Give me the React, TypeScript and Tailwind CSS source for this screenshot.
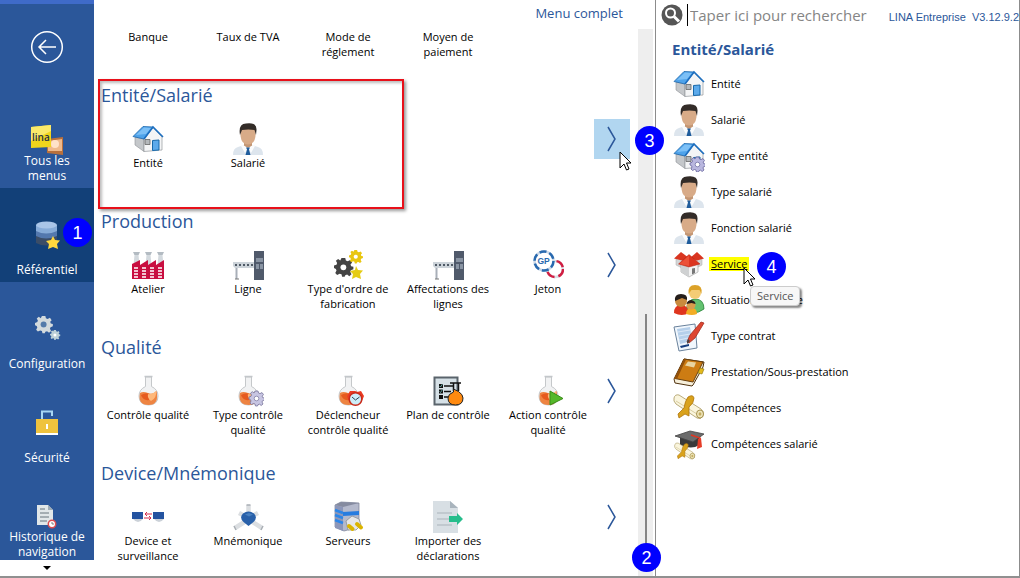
import React from 'react'

type Item = {
    label: string
    icon?: React.ReactNode
}

const Person = () => (
    <svg viewBox="0 0 32 32" className="h-8 w-8">
        <path d="M1 32q0-7 5-8l6-2h8l6 2q5 1 5 8z" fill="#dde5ed" />
        <path d="M12 18h8v5l-4 4-4-4z" fill="#c39674" />
        <path d="M11 22l5 3-3 5-4-7zM21 22l-5 3 3 5 4-7z" fill="#fbfcfd" />
        <path d="M14 24.500h4l-1 2 1.500 5.500h-5L15 26.500z" fill="#1f5c9c" />
        <path d="M8.500 8q0-5 7.500-5t7.500 5v5q-1 8.500-7.500 8.500T8.500 13z" fill="#d8ab88" />
        <path d="M8 12Q6 1 14 .500 25-1 24.500 7L24 12l-1.500-5q-6-1-12.500 0z" fill="#332c28" />
    </svg>
)

const House = ({ gear = false }: { gear?: boolean }) => (
    <svg viewBox="0 0 32 32" className="h-8 w-8">
        <path d="M3 14l9 2v12.500L3 22z" fill="#c4c7ca" stroke="#8d9195" strokeWidth=".6" />
        <path d="M12 15l9-10.500 9 9.500v13l-18 1.500z" fill="#f4f5f6" stroke="#94989c" strokeWidth=".7" />
        <path d="M1 13.500L11 3.500l10 .5-9 12z" fill="#4fa3ea" stroke="#1c66ab" strokeWidth=".8" />
        <path d="M4 12l8-7.500 7 .500-5 6z" fill="#7dc0f6" />
        <path d="M12 16l9-12 10 10" fill="none" stroke="#1d6fc0" strokeWidth="1.600" />
        <path d="M13 16.500h5v5h-5z" fill="#b4b8bb" stroke="#666" strokeWidth=".8" />
        <path d="M20.500 17.500l6.500-.5v10l-6.500.5z" fill="#5caaeb" stroke="#1769aa" />
        {gear && <g transform="translate(17 17)"><Gear fill="#b9b7df" stroke="#67659c" /></g>}
    </svg>
)

// drawn in a 15x15 box
const Gear = ({ fill, stroke = 'none' }: { fill: string; stroke?: string }) => (
    <g>
        <path d="M6 0h3l.5 2 1.500.6 2-1 1.500 2-1.300 1.500.5 1.500 1.800.4v2l-2 .8-.5 1.200 1 2-1.800 1.500-1.700-1.300-1.500.5L8.500 15h-2L6 13l-1.500-.5-2 1L1 12l1-2-.5-1.300L0 8V6l2-.7.5-1.300-1-1.800L3.300.7 5 2z" fill={fill} stroke={stroke} strokeWidth=".8" />
        <circle cx="7.500" cy="7.500" r="2.300" fill="#fff" stroke={stroke} strokeWidth=".7" />
    </g>
)

const Factory = () => (
    <svg viewBox="0 0 32 32" className="h-8 w-8">
        {[0, 1, 2].map((n) => (
            <g key={n} transform={`translate(${n * 12})`}>
                <path d="M2 3h5l-.500 3 1 10H1.500l1-10z" fill="#d3d9de" />
                <path d="M1 3h7L6.500 6H2.500z" fill="#b3bbc2" />
            </g>
        ))}
        <path d="M0 15l8-4v5l8-5v5l8-5v5l8-5v19H0z" fill="#c80e40" />
        {[2, 10, 18, 26].map((x) => (
            <path key={x} d={`M${x} 19h4m-4 3h4m-4 3h4m-4 3h4`} stroke="#fff" strokeWidth="1.500" />
        ))}
    </svg>
)

const Line = () => (
    <svg viewBox="0 0 32 32" className="h-8 w-8">
        <path d="M22 2h10v29H22z" fill="#505a6b" />
        <path d="M24 9h7v4h-7zM24 15h3v5h-3zM28 15h3v5h-3z" fill="#8994a3" />
        <path d="M1 13h21v6H3l-2-2z" fill="#ccd3d9" />
        <path d="M3 16h19" stroke="#505a66" strokeWidth="2" strokeDasharray="2 2" />
        <path d="M4.500 19v11" stroke="#a8afb8" strokeWidth="2" />
        <path d="M3 30h4" stroke="#777" />
    </svg>
)

const Order = () => (
    <svg viewBox="0 0 32 32" className="h-8 w-8">
        <g transform="translate(2 9) scale(1.250)"><Gear fill="#444" /></g>
        <g transform="translate(17 1) scale(.9)"><Gear fill="#e9c60f" /></g>
        <path d="M24 17l2 4 5 .5-3 3.500 1 5-5-2-4 2 1-5-3-3 5-1z" fill="#e5cc13" />
    </svg>
)

const Token = () => (
    <svg viewBox="0 0 32 32" className="h-8 w-8">
        <circle cx="23" cy="20" r="8" fill="#fff" stroke="#d9dfe6" strokeWidth="2.500" />
        <circle cx="23" cy="20" r="8" fill="none" stroke="#d01e42" strokeWidth="2.500" strokeDasharray="9 4" />
        <circle cx="12" cy="12" r="9.500" fill="#fff" stroke="#ccd9e8" strokeWidth="2.500" />
        <circle cx="12" cy="12" r="9.500" fill="none" stroke="#2869af" strokeWidth="2.500" strokeDasharray="7 3" />
        <text x="5.500" y="15" fontSize="8.500" fontWeight="bold" fontFamily="Liberation Sans, sans-serif" fill="#2869af">GP</text>
    </svg>
)

const Flask = ({ extra }: { extra?: 'gear' | 'clock' | 'play' }) => (
    <svg viewBox="0 0 32 32" className="h-8 w-8">
        <path d="M13.500 2h6v9.500q6.500 3 6.500 9.500 0 9-9.500 9T7 21q0-6.500 6.500-9.500z" fill="#f1f2f3" stroke="#c5c8ca" />
        <path d="M12.500 1.500h8" stroke="#c3c7ca" strokeWidth="1.500" />
        <path d="M8 18q3-2 8 0t8.500-2q3 14-8 14T8 18z" fill="#ee8442" />
        <path d="M9 20q5-3 8-1v6q-6 1-8-5z" fill="#e65a1e" />
        <path d="M16 19q4 1 8-3 1 7-5 10-4-3-3-7z" fill="#ffb87a" />
        {extra === 'gear' && <g transform="translate(17 16)"><Gear fill="#c7c5e2" stroke="#77749b" /></g>}
        {extra === 'clock' && (
            <g>
                <path d="M15 21l3-5h5l2 1 4-1 3 5-2 5H17z" fill="#eb3b22" />
                <circle cx="23.500" cy="24" r="6.300" fill="#cdeef8" stroke="#c92b1b" strokeWidth="1.500" />
                <path d="M20 22l3.500 3 4-3" fill="none" stroke="#345" />
            </g>
        )}
        {extra === 'play' && <path d="M18 16l13 7.500-13 6.500z" fill="#55b82a" stroke="#398c19" />}
    </svg>
)

const Plan = () => (
    <svg viewBox="0 0 32 32" className="h-8 w-8">
        <path d="M2.500 2.500h23v27h-23z" fill="#d6e1e7" stroke="#5a646c" strokeWidth="2" />
        <path d="M7 9h4v4H7zM7 14.500h4v4H7zM7 20h4v4H7z" fill="#111" />
        <path d="M7.500 11l1 1 2-3M7.500 16.500l1 1 2-3" fill="none" stroke="#7bd6d3" strokeWidth=".7" />
        <path d="M12 11h9M12 16.500h7M12 22h6" stroke="#111" strokeWidth="1.500" />
        <path d="M18 8h11M21.500 8v8M26.500 8v8" stroke="#111" strokeWidth="1.500" />
        <path d="M21.500 14l5 2.500q4.500 3 4.500 6.500 0 7-7.500 7T16 23q0-4 5.500-6z" fill="#ff8a10" stroke="#222" />
    </svg>
)

const Device = () => (
    <svg viewBox="0 0 32 32" className="h-8 w-8">
        <path d="M1 18q5 6 10 0zM22 18q5 6 10 0z" fill="#cbd1d8" />
        <path d="M0 11h11v7H0zM21 11h11v7H21z" fill="#2453a0" />
        <path d="M20 13h-7m2-2l-2 2 2 2M12 17h7m-2-2l2 2-2 2" fill="none" stroke="#d52c4b" />
    </svg>
)

const Molecule = () => (
    <svg viewBox="0 0 32 32" className="h-8 w-8">
        <path d="M16.500 15V4M14 20L3 27M19 20l11 7M13 15l-6-3M20 15l6-3" stroke="#dbdee1" strokeWidth="4.500" />
        <path d="M14.500 4h4M2 25l2 4M31 25l-2 4" stroke="#a9afb5" strokeWidth="1.500" />
        <path d="M11 12.500q5.500-4 11 0 4 4-.500 8.500l-5 4-5-4q-4.500-4.500-.500-8.500z" fill="#2860a9" />
        <path d="M13 13.500l4-1.500 4 1.500-4 2z" fill="#4980c0" />
    </svg>
)

const Servers = () => (
    <svg viewBox="0 0 32 32" className="h-8 w-8">
        <path d="M3 4l6-3 18 1v24l-15 4-9-4z" fill="#b4b9cc" stroke="#757c92" strokeWidth=".7" />
        <path d="M3 4l8 2v24l-8-3z" fill="#8c96b8" />
        <path d="M3 4l6-3 18 1-16 4z" fill="#858ba0" />
        <path d="M3 9l8 3M3 14l8 3M3 19l8 3" stroke="#2b86e9" strokeWidth="2.500" />
        <path d="M11 11l16-1v4l-16 1z" fill="#277cdf" />
        <path d="M14 20l6-5 7 3 2 6-5 5h-8z" fill="#e6e7e8" stroke="#8b9094" strokeWidth=".8" />
        <path d="M17 25l3.500 3M25 23l4 3.500" stroke="#dbb400" strokeWidth="4" strokeLinecap="round" />
    </svg>
)

const Import = () => (
    <svg viewBox="0 0 32 32" className="h-8 w-8">
        <path d="M1 0h17l8 7v25H1z" fill="#d8dfe4" />
        <path d="M18 0v7h8z" fill="#a9b4bd" />
        <path d="M5 12h15M5 18h12M5 24h15" stroke="#aab3ba" />
        <path d="M17 15h8v-3l6 6-6 6v-3h-8z" fill="#27bd8c" />
    </svg>
)

const Village = () => (
    <svg viewBox="0 0 32 32" className="h-8 w-8">
        <path d="M3 10h10v9l-4 1-6-3zM19 10h10v7l-6 3-4-1z" fill="#d4d6d7" stroke="#aaa" strokeWidth=".5" />
        <path d="M1 10.500L8 4l8 6-7 2.500z" fill="#d93520" />
        <path d="M17 10l7-6 7 6.500-7 2z" fill="#d93520" />
        <path d="M8 16l8 2 9-2v8l-9 5-8-5z" fill="#f3f3f3" stroke="#999" strokeWidth=".6" />
        <path d="M8 16l8 2v11l-8-5z" fill="#cfd1d2" />
        <path d="M5.500 16L16 6.500 27 16l-11 3z" fill="#dc3520" stroke="#b32616" strokeWidth=".5" />
        <path d="M6.500 16L16 7.500V18z" fill="#ec5138" />
        <path d="M19 20.500l3-.5v5l-3 1.500z" fill="#777" />
    </svg>
)

const Family = () => (
    <svg viewBox="0 0 32 32" className="h-8 w-8">
        <path d="M13 28q1-13 9-13 9 0 9 10-5 4-12 4z" fill="#63c270" stroke="#2b833a" strokeWidth=".8" />
        <circle cx="22" cy="9" r="6" fill="#f5cc75" />
        <path d="M15.500 10q-1-9 6.500-9 8 0 6.500 9l-2-4h-8z" fill="#dca228" />
        <path d="M1 29q0-8 7-8t8 8q-7 4-15 0z" fill="#df351e" />
        <path d="M13 30q0-6 6-6 5 0 5 6-5 2-11 0z" fill="#f2ac24" />
        <circle cx="8" cy="17" r="6" fill="#c98a3e" />
        <circle cx="18" cy="21" r="4.500" fill="#d99c4c" />
        <path d="M2 17q-1-7 6-7 7 0 6 6l-5-2zM13.500 20q1-4 5-4 4 1 4 4l-4-1z" fill="#251e1b" />
    </svg>
)

const Contract = () => (
    <svg viewBox="0 0 32 32" className="h-8 w-8">
        <path d="M1 7l21-3 2 24-18 3z" fill="#f1f7fd" stroke="#6a829c" />
        <path d="M4 9l13-2 2 14-12 3z" fill="#b5cfea" />
        <path d="M7 26l9-2v2l-8 2z" fill="#173f80" />
        <path d="M5 12l12-2M6 16l11-2M6 20l9-2" stroke="#dbe8f6" />
        <path d="M14 22l3-7L28 2l3 1-9 15-6 5z" fill="#dd4632" stroke="#a52d20" strokeWidth=".8" />
        <path d="M14 22l1-3 2 2-3 3z" fill="#444" />
    </svg>
)

const Book = () => (
    <svg viewBox="0 0 32 32" className="h-8 w-8">
        <path d="M1 23L11 3l20 3-1 5-10 18-1 1L2 27z" fill="#f6efdb" stroke="#50320f" />
        <path d="M2 22.500L11 3l19 3-10 20z" fill="#cd7c13" stroke="#68400f" />
        <path d="M1 23L11 3l2 .5L4 23z" fill="#93510b" />
        <path d="M15 5.500l8 1-2 5-9-2z" fill="#e8d4a2" />
        <path d="M27 12l4 1-2 5-4-1z" fill="#e2b91c" stroke="#8d700a" strokeWidth=".6" />
    </svg>
)

const Scroll = () => (
    <g>
        <path d="M1 6q1-4 5-3l22 14q4 3 2 7-2 4-6 2L3 12q-3-3-2-6z" fill="#faf5dd" stroke="#a8985f" strokeWidth=".8" />
        <path d="M3 9l21 13" stroke="#d8cda0" />
        <ellipse cx="27" cy="22" rx="3.500" ry="4" fill="#f0e7bd" stroke="#947d32" strokeWidth=".8" />
        <ellipse cx="27" cy="22" rx="1.500" ry="1.800" fill="#c4ad62" />
        <path d="M15 5q5-3 6 1 0 5-5 9v9l-4-2-6 4-1-4 6-6q1-7 4-11z" fill="#d9a21c" stroke="#ae750c" strokeWidth=".8" />
    </g>
)

const Skills = () => (
    <svg viewBox="0 0 32 32" className="h-8 w-8"><Scroll /></svg>
)

const Graduate = () => (
    <svg viewBox="0 0 32 32" className="h-8 w-8">
        <path d="M7 9h19v8q-7 5-19 0z" fill="#3a3a3a" />
        <path d="M2 8l15-5 14 3-11 8z" fill="#6b6b6b" stroke="#444" strokeWidth=".8" />
        <path d="M18 7l9 3v6" fill="none" stroke="#df3521" strokeWidth="1.500" />
        <path d="M25 11l3-1 1 9-5 2z" fill="#e53d28" />
        <g transform="translate(1 13) scale(.680)"><Scroll /></g>
    </svg>
)

const Logo = () => (
    <svg viewBox="0 0 32 32" className="h-8 w-8">
        <path d="M16 14l16-2v18l-16-2z" fill="#b9703c" />
        <path d="M17 16l14-2v12H17z" fill="#efb98c" />
        <circle cx="24" cy="19" r="4" fill="#ffe2c8" />
        <path d="M0 2l20-2v22L0 23z" fill="#f1d51d" />
        <path d="M0 2l20-2v6L0 16z" fill="#fae96a" />
        <text x="1" y="16" fontSize="10" fontFamily="Open Sans, sans-serif" fontWeight="600" fill="#253044">lina</text>
    </svg>
)

const Database = () => (
    <svg viewBox="0 0 32 32" className="h-8 w-8">
        <path d="M5 16v8q10 5 21 0v-8z" fill="#3b4d67" />
        <path d="M5 10v7q10 5 21 0v-7z" fill="#5378ae" />
        <path d="M5 6v6q10 5 21 0V6z" fill="#86abd8" />
        <ellipse cx="15.500" cy="6" rx="10.500" ry="3.500" fill="#a9c5e8" />
        <path d="M22 17l2 4 5 .5-3 3.500 1 5-5-2-5 2 1-5-3-3 5-1z" fill="#ffd83e" />
    </svg>
)

const Settings = () => (
    <svg viewBox="0 0 32 32" className="h-8 w-8">
        <g transform="translate(4 3) scale(1.150)"><Gear fill="#d3dadd" /></g>
        <g transform="translate(19 17) scale(.660)"><Gear fill="#bdd0d7" /></g>
        <circle cx="12.600" cy="11.600" r="3" fill="#547baa" />
    </svg>
)

const Lock = () => (
    <svg viewBox="0 0 32 32" className="h-8 w-8">
        <path d="M11 13V4.500h10V9" fill="none" stroke="#a8d7f4" strokeWidth="2" />
        <path d="M5 12h22v15H5z" fill="#efc33e" />
        <path d="M5 27h22" stroke="#fff" strokeWidth="2" />
        <path d="M15 17h2v5h-2z" fill="#fff" />
    </svg>
)

const History = () => (
    <svg viewBox="0 0 32 32" className="h-8 w-8">
        <path d="M6 4h11l5 5v15H6z" fill="#e1e7e9" />
        <path d="M17 4v5h5z" fill="#9eacb6" />
        <path d="M9 8h5M9 12h9M9 16h9M9 20h7" stroke="#67747d" />
        <circle cx="21" cy="23" r="3.700" fill="#fff" stroke="#dc4d50" strokeWidth="1.500" />
        <path d="M21 21v2h2" fill="none" stroke="#666" strokeWidth=".8" />
    </svg>
)

const Cursor = ({ className }: { className: string }) => (
    <svg viewBox="0 0 13 20" className={`pointer-events-none absolute z-20 h-5 w-[13px] ${className}`}>
        <path d="M1 1v16l4-4 2.500 6 2.500-1-2.500-6H12z" fill="#fff" stroke="#000" />
    </svg>
)

const Badge = ({ value, className }: { value: number; className: string }) => (
    <span className={`absolute z-20 flex h-[29px] w-[29px] items-center justify-center rounded-full bg-[#0000ff] font-['Liberation_Sans',sans-serif] text-lg leading-none text-white ${className}`}>
        {value}
    </span>
)

const menus = [
    { label: 'Tous les menus', icon: <Logo /> },
    { label: 'Référentiel', icon: <Database />, active: true },
    { label: 'Configuration', icon: <Settings /> },
    { label: 'Sécurité', icon: <Lock /> },
    { label: 'Historique de navigation', icon: <History /> },
]

const payments: Item[] = [
    { label: 'Banque' },
    { label: 'Taux de TVA' },
    { label: 'Mode de réglement' },
    { label: 'Moyen de paiement' },
]

const sections: { title: string; items: Item[]; selected?: boolean }[] = [
    {
        title: 'Entité/Salarié',
        selected: true,
        items: [
            { label: 'Entité', icon: <House /> },
            { label: 'Salarié', icon: <Person /> },
        ],
    },
    {
        title: 'Production',
        items: [
            { label: 'Atelier', icon: <Factory /> },
            { label: 'Ligne', icon: <Line /> },
            { label: "Type d'ordre de fabrication", icon: <Order /> },
            { label: 'Affectations des lignes', icon: <Line /> },
            { label: 'Jeton', icon: <Token /> },
        ],
    },
    {
        title: 'Qualité',
        items: [
            { label: 'Contrôle qualité', icon: <Flask /> },
            { label: 'Type contrôle qualité', icon: <Flask extra="gear" /> },
            { label: 'Déclencheur contrôle qualité', icon: <Flask extra="clock" /> },
            { label: 'Plan de contrôle', icon: <Plan /> },
            { label: 'Action contrôle qualité', icon: <Flask extra="play" /> },
        ],
    },
    {
        title: 'Device/Mnémonique',
        items: [
            { label: 'Device et surveillance', icon: <Device /> },
            { label: 'Mnémonique', icon: <Molecule /> },
            { label: 'Serveurs', icon: <Servers /> },
            { label: 'Importer des déclarations', icon: <Import /> },
        ],
    },
]

const links: Item[] = [
    { label: 'Entité', icon: <House /> },
    { label: 'Salarié', icon: <Person /> },
    { label: 'Type entité', icon: <House gear /> },
    { label: 'Type salarié', icon: <Person /> },
    { label: 'Fonction salarié', icon: <Person /> },
    { label: 'Service', icon: <Village /> },
    { label: 'Situation familiale', icon: <Family /> },
    { label: 'Type contrat', icon: <Contract /> },
    { label: 'Prestation/Sous-prestation', icon: <Book /> },
    { label: 'Compétences', icon: <Skills /> },
    { label: 'Compétences salarié', icon: <Graduate /> },
]

const Sidebar = () => {
    return (
        <nav className="flex w-[94px] shrink-0 flex-col border-t-4 border-[#3f6bc9] bg-[#2b579a] text-white">
            <div className="min-h-0 flex-1 overflow-hidden">
                <div className="flex h-[90px] justify-center pt-[26px]">
                    <button aria-label="Retour" className="h-[34px] w-[34px]">
                        <svg viewBox="0 0 34 34" fill="none" stroke="#fff" strokeWidth="1.500">
                            <circle cx="17" cy="17" r="15.300" />
                            <path d="M26 17H9m7-7l-7 7 7 7" />
                        </svg>
                    </button>
                </div>
                {menus.map((menu) => (
                    <button
                        key={menu.label}
                        className={`relative flex h-[94px] w-full flex-col items-center pt-[31px] ${menu.active ? 'bg-[#124078]' : ''}`}
                    >
                        <span className="-mb-1 h-8">{menu.icon}</span>
                        <span className="relative flex h-[30px] items-end px-2 text-xs leading-[15px]">{menu.label}</span>
                        {menu.active && <Badge value={1} className="top-[30px] right-0.5" />}
                    </button>
                ))}
            </div>
            <button aria-label="Suite" className="flex h-4 shrink-0 items-center justify-center bg-white">
                <svg viewBox="0 0 8 4" className="h-1 w-2"><path d="M0 0h8L4 4z" /></svg>
            </button>
        </nav>
    )
}

const ItemGrid = ({ items }: { items: Item[] }) => {
    return (
        <div className="grid flex-1 grid-cols-5 items-start">
            {items.map((item) => (
                <button key={item.label} className="flex flex-col items-center">
                    {item.icon}
                    <span className="min-h-[30px] text-[11px] leading-[15px]">{item.label}</span>
                </button>
            ))}
        </div>
    )
}

const MainMenu = () => {
    return (
        <main className="relative flex w-[55%] shrink-0 flex-col">
            <header className="flex h-[29px] items-start justify-end pt-[3px] pr-8">
                <a href="#complet" className="text-[13px] leading-5 text-[#2b579a]">Menu complet</a>
            </header>
            <div className="flex flex-1 gap-2 pr-0.5">
                <div className="flex flex-1 flex-col gap-6 pl-1">
                    <div className="flex pr-8">
                        <ItemGrid items={payments} />
                    </div>
                    {sections.map((section) => (
                        <section key={section.title} className="relative">
                            <h2 className="pl-[3px] text-lg leading-6 text-[#2b579a]">{section.title}</h2>
                            <div className="flex items-start pt-4">
                                <ItemGrid items={section.items} />
                                <button
                                    aria-label={`Afficher ${section.title}`}
                                    className={`-mt-1 -ml-1 flex h-10 w-9 items-center justify-center ${section.selected ? 'bg-[#b1d6f0]' : ''}`}
                                >
                                    <svg viewBox="0 0 10 26" fill="none" stroke="#2b579a" strokeWidth="1.500" className="h-[26px] w-2.5">
                                        <path d="M1 1l7 12-7 12" />
                                    </svg>
                                </button>
                            </div>
                            {section.selected && (
                                <>
                                    <div className="pointer-events-none absolute -top-1 left-0 h-[130px] w-[306px] border-2 border-[#e8101a] shadow-[2px_2px_3px_#0006,inset_2px_2px_3px_#0004]" />
                                    <Cursor className="top-[68px] -right-0.5" />
                                    <Badge value={3} className="top-[43px] -right-[34px]" />
                                </>
                            )}
                        </section>
                    ))}
                </div>
                <div className="flex w-[15px] flex-col items-center bg-[#eeeeee]">
                    <div className="mt-auto mb-3 h-[250px] w-0.5 bg-[#858585]" />
                </div>
            </div>
            <Badge value={2} className="right-[-6px] bottom-1" />
        </main>
    )
}

const SidePanel = () => {
    return (
        <aside className="min-w-0 flex-1 border-x border-[#8c8c8c] pl-[5px]">
            <div className="flex h-[30px] items-center">
                <label htmlFor="search" aria-label="Rechercher">
                    <svg viewBox="0 0 22 22" className="h-[22px] w-[22px]">
                        <circle cx="11" cy="11" r="10.500" fill="#555" />
                        <circle cx="9.500" cy="9" r="4.500" fill="none" stroke="#fff" strokeWidth="2" />
                        <path d="M13 12.500l5 5" stroke="#fff" strokeWidth="3" />
                    </svg>
                </label>
                <input
                    id="search"
                    placeholder="Taper ici pour rechercher"
                    className="ml-1 h-[22px] min-w-0 flex-1 border-l border-black pl-0.5 text-[15px] outline-none placeholder:text-[#858585]"
                />
                <span className="pt-1 font-['Liberation_Sans',sans-serif] text-[11px] whitespace-pre text-[#2b579a]">LINA Entreprise  V3.12.9.2</span>
            </div>
            <h2 className="pt-1.5 pl-[11px] text-[15px] leading-[26px] font-bold text-[#2b579a]">Entité/Salarié</h2>
            <ul className="pt-1 pl-[11px]">
                {links.map((link) => (
                    <li key={link.label} className="relative flex h-9 items-center gap-1.5 pl-px text-[11px]">
                        {link.icon}
                        {link.label === 'Service' ? (
                            <>
                                <a href="#service" className="-mx-0.5 bg-[#ffff00] px-0.5 leading-[14px] underline">{link.label}</a>
                                <Badge value={4} className="top-1.5 left-[85px]" />
                                <Cursor className="top-[21px] left-[71px]" />
                                <span role="tooltip" className="absolute top-[40px] left-[78px] z-10 rounded border border-[#ccc] bg-[#f7f7f7] px-1.5 leading-[18px] text-[#555] shadow-[2px_2px_2px_#0007]">Service</span>
                            </>
                        ) : (
                            <a href="#">{link.label}</a>
                        )}
                    </li>
                ))}
            </ul>
        </aside>
    )
}

const App = () => {
    return (
        <div className="flex h-screen border-b-2 border-[#909090] bg-white font-['Open_Sans',sans-serif] text-black">
            <Sidebar />
            <MainMenu />
            <SidePanel />
        </div>
    )
}

export default App
